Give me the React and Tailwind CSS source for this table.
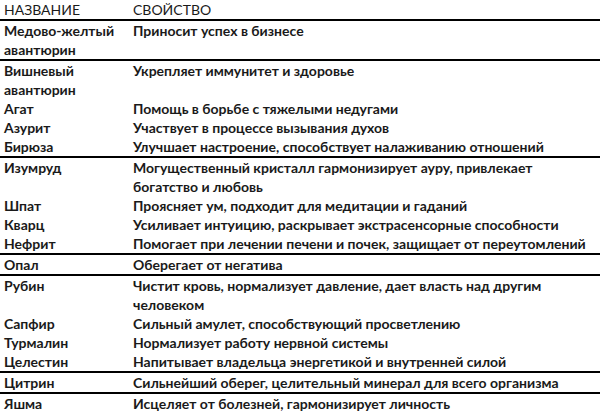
import React from "react";

const rows = [
  { n: ["Медово-желтый", "авантюрин"], p: ["Приносит успех в бизнесе"], line: true },
  { n: ["Вишневый", "авантюрин"], p: ["Укрепляет иммунитет и здоровье"] },
  { n: ["Агат"], p: ["Помощь в борьбе с тяжелыми недугами"] },
  { n: ["Азурит"], p: ["Участвует в процессе вызывания духов"] },
  { n: ["Бирюза"], p: ["Улучшает настроение, способствует налаживанию отношений"], line: true },
  { n: ["Изумруд"], p: ["Могущественный кристалл гармонизирует ауру, привлекает", "богатство и любовь"] },
  { n: ["Шпат"], p: ["Проясняет ум, подходит для медитации и гаданий"] },
  { n: ["Кварц"], p: ["Усиливает интуицию, раскрывает экстрасенсорные способности"] },
  { n: ["Нефрит"], p: ["Помогает при лечении печени и почек, защищает от переутомлений"], line: true },
  { n: ["Опал"], p: ["Оберегает от негатива"], line: true },
  { n: ["Рубин"], p: ["Чистит кровь, нормализует давление, дает власть над другим", "человеком"] },
  { n: ["Сапфир"], p: ["Сильный амулет, способствующий просветлению"] },
  { n: ["Турмалин"], p: ["Нормализует работу нервной системы"] },
  { n: ["Целестин"], p: ["Напитывает владельца энергетикой и внутренней силой"], line: true },
  { n: ["Цитрин"], p: ["Сильнейший оберег, целительный минерал для всего организма"], line: true },
  { n: ["Яшма"], p: ["Исцеляет от болезней, гармонизирует личность"] },
];

export default function App() {
  return (
    <div
      className="w-[600px] h-[413px] overflow-hidden bg-white text-[#1a1a1a] text-[14px] leading-[19px] font-bold whitespace-nowrap"
      style={{ fontFamily: "Lato, 'Noto Sans', sans-serif" }}
    >
      <div className="flex border-b-2 border-black">
        <div className="w-[133px] pl-[4px] font-normal">НАЗВАНИЕ</div>
        <div className="flex-1 font-normal">СВОЙСТВО</div>
      </div>
      {rows.map((r, i) => (
        <div key={i} className={"flex " + (r.line ? "border-b-2 border-black" : "")}>
          <div className="w-[133px] shrink-0 pl-[4px]">
            {r.n.map((t, j) => (
              <div key={j}>{t}</div>
            ))}
          </div>
          <div className="flex-1">
            {r.p.map((t, j) => (
              <div key={j}>{t}</div>
            ))}
          </div>
        </div>
      ))}
    </div>
  );
}
